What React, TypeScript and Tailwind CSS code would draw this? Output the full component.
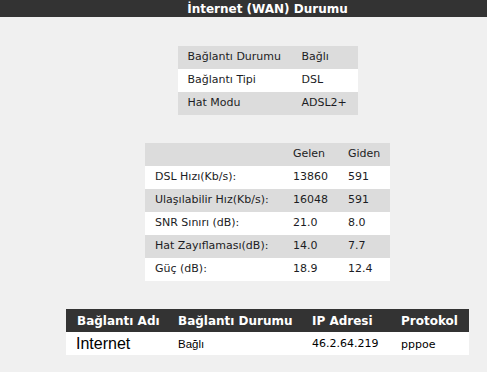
import React from "react";

const V = { fontFamily: '"DejaVu Sans", Verdana, sans-serif' };
const A = { fontFamily: '"Liberation Sans", Arial, sans-serif' };

function Row({ cells, widths, bg, className = "" }: { cells: string[]; widths: number[]; bg: string; className?: string }) {
  return (
    <div className={`flex h-[23px] items-center ${bg} ${className}`}>
      {cells.map((c, i) => (
        <div key={i} style={{ width: widths[i] }} className="shrink-0 whitespace-nowrap">
          {c}
        </div>
      ))}
    </div>
  );
}

export default function App() {
  const t1 = [
    ["Bağlantı Durumu", "Bağlı"],
    ["Bağlantı Tipi", "DSL"],
    ["Hat Modu", "ADSL2+"],
  ];
  const t2 = [
    ["DSL Hızı(Kb/s):", "13860", "591"],
    ["Ulaşılabilir Hız(Kb/s):", "16048", "591"],
    ["SNR Sınırı (dB):", "21.0", "8.0"],
    ["Hat Zayıflaması(dB):", "14.0", "7.7"],
    ["Güç (dB):", "18.9", "12.4"],
  ];
  return (
    <div className="w-[487px] h-[372px] overflow-hidden bg-[#f0f0f0]" style={V}>
      <div className="w-[535px]">
        <div className="h-[17px] bg-[#333333] flex items-center justify-center text-white font-bold text-[12px] leading-none">
          İnternet (WAN) Durumu
        </div>

        <div className="flex flex-col items-center text-[11px] text-[#1c1c24]">
          <div className="mt-[29px] w-[180px] pl-[10px] bg-white">
            {t1.map((r, i) => (
              <Row key={i} cells={r} widths={[114, 56]} bg={i % 2 === 0 ? "bg-[#dcdcdc] -ml-[10px] pl-[10px]" : "bg-white -ml-[10px] pl-[10px]"} />
            ))}
          </div>

          <div className="mt-[28px] w-[245px]">
            <Row cells={["", "Gelen", "Giden"]} widths={[138, 55, 42]} bg="bg-[#dcdcdc] pl-[10px]" />
            {t2.map((r, i) => (
              <Row key={i} cells={r} widths={[138, 55, 42]} bg={i % 2 === 0 ? "bg-white pl-[10px]" : "bg-[#dcdcdc] pl-[10px]"} />
            ))}
          </div>

          <div className="mt-[28px] w-[403px]">
            <div className="flex h-[23px] items-center bg-[#333333] text-white font-bold text-[12px] pl-[11px]">
              <div className="w-[101px] shrink-0 whitespace-nowrap">Bağlantı Adı</div>
              <div className="w-[134px] shrink-0 whitespace-nowrap">Bağlantı Durumu</div>
              <div className="w-[89px] shrink-0 whitespace-nowrap">IP Adresi</div>
              <div className="shrink-0 whitespace-nowrap">Protokol</div>
            </div>
            <div className="flex h-[23px] items-center bg-white text-black pl-[10px]">
              <div className="w-[102px] shrink-0 text-[16px]" style={A}>Internet</div>
              <div className="w-[134px] shrink-0 text-[11.5px] pt-[2px]" style={A}>Bağlı</div>
              <div className="w-[89px] shrink-0 text-[11px] pt-[2px]">46.2.64.219</div>
              <div className="shrink-0 text-[11px] pt-[3px]">pppoe</div>
            </div>
          </div>
        </div>
      </div>
    </div>
  );
}
